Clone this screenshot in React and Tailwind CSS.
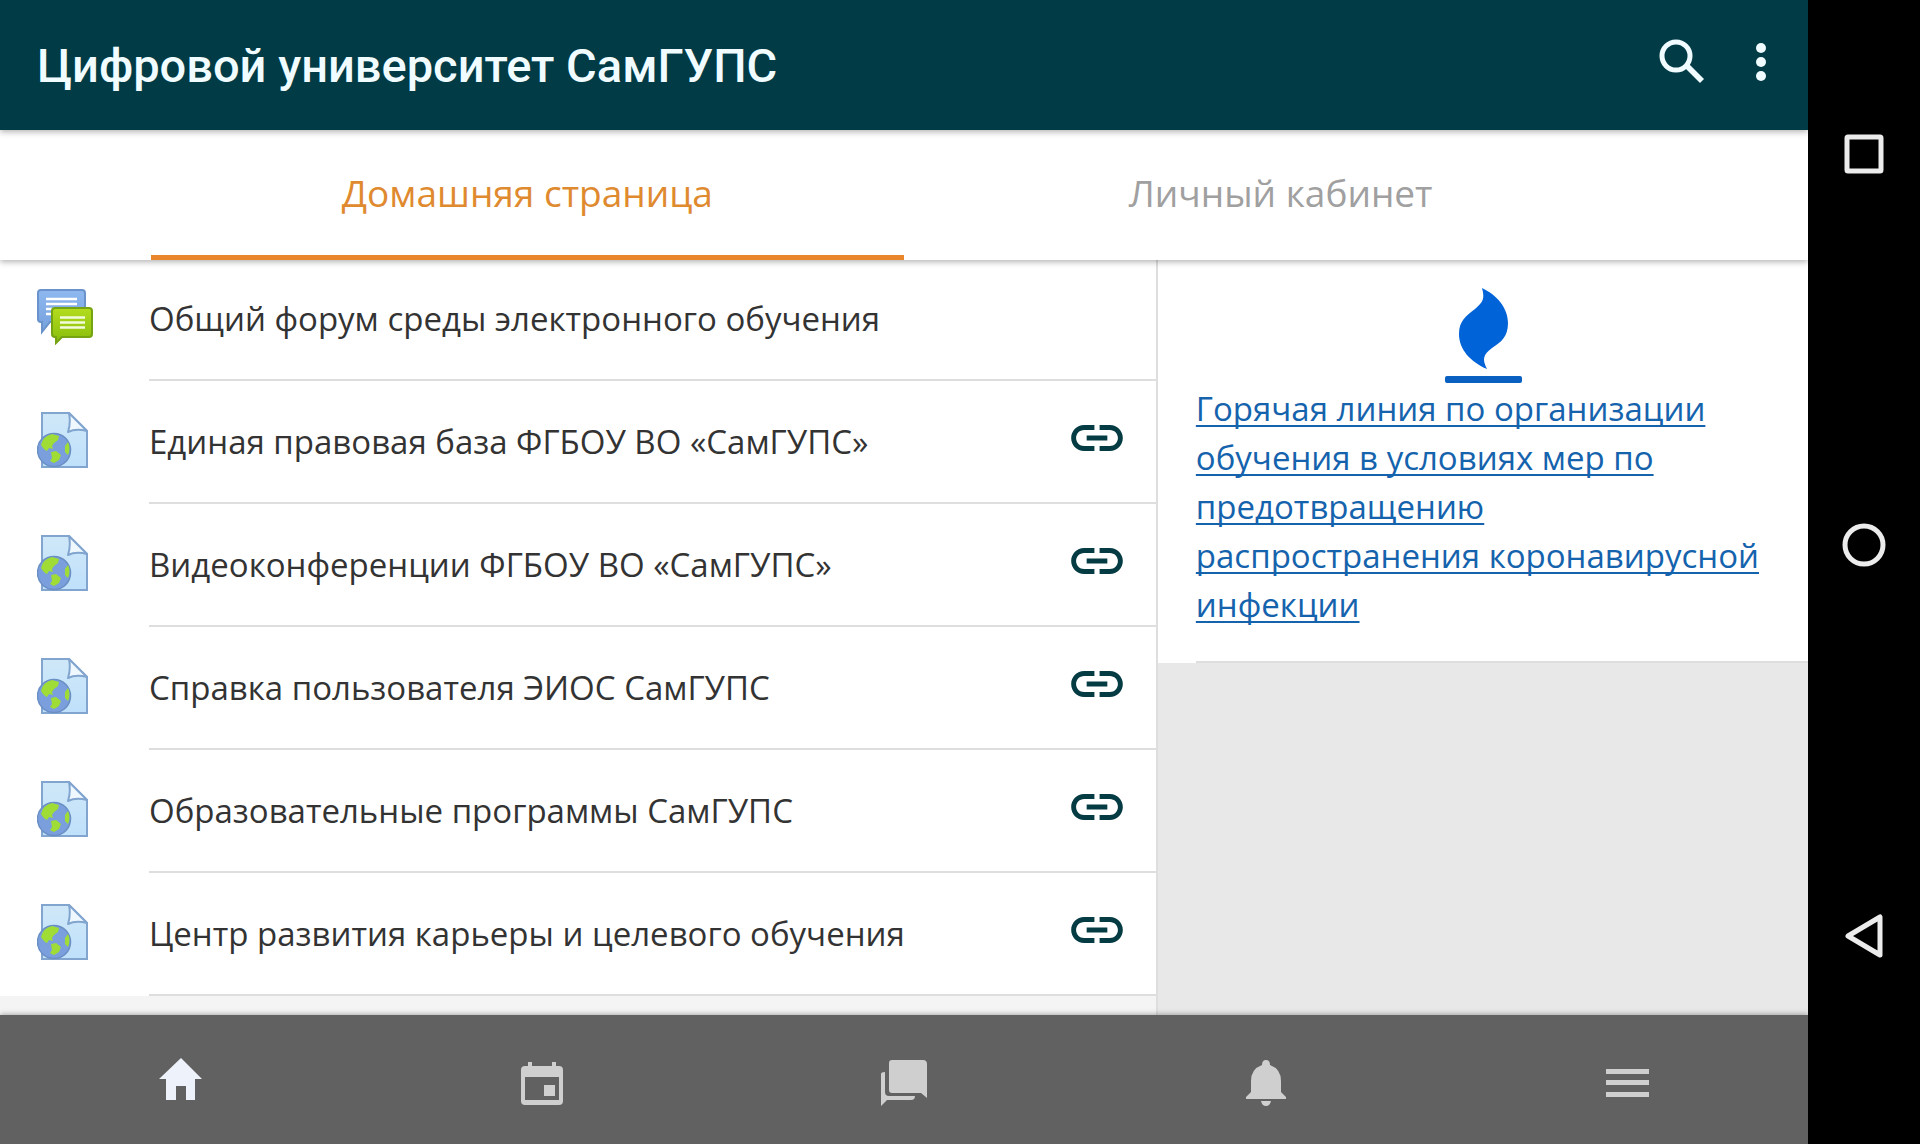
const resources = [
  { title: 'Общий форум среды электронного обучения', kind: 'forum' },
  { title: 'Единая правовая база ФГБОУ ВО «СамГУПС»', kind: 'page' },
  { title: 'Видеоконференции ФГБОУ ВО «СамГУПС»', kind: 'page' },
  { title: 'Справка пользователя ЭИОС СамГУПС', kind: 'page' },
  { title: 'Образовательные программы СамГУПС', kind: 'page' },
  { title: 'Центр развития карьеры и целевого обучения', kind: 'page' },
];

function ForumIcon() {
  return (
    <svg viewBox="0 0 56 56" className="size-14 shrink-0" aria-hidden="true">
      <defs>
        <linearGradient id="blueBubble" x1="0" y1="0" x2="0" y2="1">
          <stop offset="0" stopColor="#8fb8f0" />
          <stop offset="1" stopColor="#74a0dc" />
        </linearGradient>
        <linearGradient id="greenBubble" x1="0" y1="0" x2="0" y2="1">
          <stop offset="0" stopColor="#b4dc1e" />
          <stop offset="1" stopColor="#86bc0c" />
        </linearGradient>
      </defs>
      <path d="M4 1h41q3 0 3 3v26q0 3-3 3H13l-8 10V33H4q-3 0-3-3V4q0-3 3-3z" fill="url(#blueBubble)" stroke="#6b93cb" strokeWidth="2" />
      <path d="M9 10h31M9 15h31M9 20h10M9 25h6" stroke="#fff" strokeWidth="2.500" />
      <path d="M18 19h34q3 0 3 3v23q0 3-3 3H25l-6 6v-6h-1q-3 0-3-3V22q0-3 3-3z" fill="url(#greenBubble)" stroke="#76a312" strokeWidth="2" />
      <path d="M23 28.500h25M23 33.500h25M23 38.500h25" stroke="#f2fadc" strokeWidth="2.500" />
    </svg>
  );
}

function PageIcon() {
  return (
    <svg viewBox="0 0 56 56" className="size-14 shrink-0" aria-hidden="true">
      <defs>
        <linearGradient id="sheet" x1="0" y1="0" x2="0" y2="1">
          <stop offset="0" stopColor="#cfe8f8" />
          <stop offset="1" stopColor="#bfe0fb" />
        </linearGradient>
      </defs>
      <path d="M5 1h27l18 18v36H5z" fill="url(#sheet)" stroke="#82a5d0" strokeWidth="2" />
      <path d="M32 1q2 10-1 19 8-4 19-1z" fill="#eef8fe" stroke="#82a5d0" strokeWidth="2" strokeLinejoin="round" />
      <circle cx="17" cy="38" r="16.500" fill="#7a9fdc" stroke="#6a8fc4" strokeWidth="1.500" />
      <path d="M4 33q2-9 11-11l7 2-1 4-4 3-2 3 1 3-4-1-2 3q-3-1-6-6zM14 40l5-1 5 4-2 5-5 3-4-2 2-3zM31 30q3 6 0 13l-3-3v-6z" fill="#9fdc35" />
    </svg>
  );
}

function SolidIcon({ d, className }) {
  return (
    <svg viewBox="0 0 24 24" fill="currentColor" className={className} aria-hidden="true">
      <path d={d} />
    </svg>
  );
}

const LINK =
  'M3.900 12c0-1.710 1.390-3.100 3.100-3.100h4V7H7c-2.760 0-5 2.240-5 5s2.240 5 5 5h4v-1.900H7c-1.710 0-3.100-1.390-3.100-3.100zM8 13h8v-2H8v2zm9-6h-4v1.900h4c1.710 0 3.100 1.390 3.100 3.100s-1.390 3.100-3.100 3.100h-4V17h4c2.760 0 5-2.240 5-5s-2.240-5-5-5z';

const navItems = [
  { label: 'Домашняя страница', active: true, paths: <path d="M18 40V26h10v14h9V19h7L23-2 1 19h7v21z" /> },
  {
    label: 'Календарь',
    paths: <path fillRule="evenodd" d="M9 2h4v4h20V2h4v4h3q4 0 4 4v31q0 4-4 4H6q-4 0-4-4V10q0-4 4-4h3zM6 17v23h34V17zM25 25h11v11H25z" />,
  },
  {
    label: 'Сообщения',
    paths: <path d="M11 0h31q4 0 4 4v34l-6-5H11q-3 0-3-3V3q0-3 3-3zM0 46V14q0-2 4-2v20q0 4 4 4h26q0 4-4 4H6z" />,
  },
  {
    label: 'Уведомления',
    paths: <path d="M23 0q4 0 4 5 11 4 11 16v11l5 5v2H3v-2l5-5V21Q8 9 19 5q0-5 4-5zM18 41h10q-1 5-5 5t-5-5z" />,
  },
  { label: 'Ещё', paths: <path d="M2 9h43v5H2zM2 20h43v5H2zM2 32h43v5H2z" /> },
];

function TopBar() {
  return (
    <header className="z-20 flex h-[130px] shrink-0 items-center bg-[#003b46] pr-2 pl-[37px] text-[#f0fcff] shadow-[0_2px_6px_rgba(0,0,0,0.3)]">
      <h1 className="min-w-0 flex-1 font-['Roboto',sans-serif] text-[47px] leading-none font-medium">Цифровой университет СамГУПС</h1>
      <button type="button" aria-label="Поиск" className="flex size-20 items-center justify-center pb-1.5">
        <svg viewBox="0 0 46 46" className="size-[46px]" fill="none" stroke="currentColor" aria-hidden="true">
          <circle cx="17" cy="17" r="14" strokeWidth="5" />
          <path d="M27 27v3l14 14 4-4-14-14h-3z" fill="currentColor" stroke="none" />
        </svg>
      </button>
      <button type="button" aria-label="Меню" className="flex h-20 w-[78px] items-center justify-center pb-1.5">
        <svg viewBox="0 0 12 40" className="h-10 w-3" fill="currentColor" aria-hidden="true">
          <circle cx="6" cy="6" r="5" />
          <circle cx="6" cy="20" r="5" />
          <circle cx="6" cy="34" r="5" />
        </svg>
      </button>
    </header>
  );
}

function Tabs() {
  return (
    <div role="tablist" className="z-10 grid h-[130px] shrink-0 grid-cols-12 bg-white text-[37px] shadow-[0_2px_6px_rgba(0,0,0,0.3)]">
      <button type="button" role="tab" aria-selected="true" className="col-span-5 col-start-2 border-b-5 border-[#e9852b] text-[#e08a30]">
        Домашняя страница
      </button>
      <button type="button" role="tab" aria-selected="false" className="col-span-5 border-b-5 border-transparent text-[#a0a0a0]">
        Личный кабинет
      </button>
    </div>
  );
}

function ResourceRow({ item }) {
  return (
    <li className="flex h-[123px] items-center bg-white pl-[37px] text-[#333]">
      <div className="w-28 pb-1.5">{item.kind === 'forum' ? <ForumIcon /> : <PageIcon />}</div>
      <div className="flex h-full min-w-0 flex-1 items-center border-b-2 border-[#dedede] pr-7">
        <a href="#resource" className="min-w-0 flex-1 text-[33px]">{item.title}</a>
        {item.kind === 'page' && (
          <button type="button" aria-label="Открыть ссылку" className="pb-2 text-[#053c44]">
            <SolidIcon d={LINK} className="size-[62px]" />
          </button>
        )}
      </div>
    </li>
  );
}

function HotlineCard() {
  return (
    <div className="bg-white pl-[38px]">
      <div className="border-b-2 border-[#dedede] pt-7 pr-9 pb-8">
        <svg viewBox="0 0 78 96" className="mx-auto h-24 w-[78px]" aria-hidden="true">
          <path d="M37 0C52 7 63 20 63 35C63 49 56 54 47 60C38 67 37 71 42 81C26 74 14 62 14 46C14 33 21 28 30 21C38 14 40 11 37 0z" fill="#0063d8" />
          <rect y="88" width="77" height="7" rx="2" fill="#0a60c0" />
        </svg>
        <a href="#hotline" className="block text-[33px] leading-[49px] text-[#1563ad] underline decoration-2 underline-offset-4 [text-decoration-skip-ink:none]">
          Горячая линия по организации обучения в условиях мер по предотвращению распространения коронавирусной инфекции
        </a>
      </div>
    </div>
  );
}

function BottomNav() {
  return (
    <nav className="z-10 flex h-[129px] shrink-0 bg-[#616161] shadow-[0_-1px_5px_rgba(0,0,0,0.3)]">
      {navItems.map((item) => (
        <button
          key={item.label}
          type="button"
          aria-label={item.label}
          className={item.active ? 'flex flex-1 items-center justify-center pt-1.5 text-[#edf2fb]' : 'flex flex-1 items-center justify-center pt-1.5 text-[#cfcfcf]'}
        >
          <svg viewBox="0 0 46 46" className="size-[46px] overflow-visible" fill="currentColor" aria-hidden="true">
            {item.paths}
          </svg>
        </button>
      ))}
    </nav>
  );
}

function SystemBar() {
  return (
    <aside className="flex w-28 shrink-0 flex-col items-center justify-between bg-black pt-[126px] pb-[180px]">
      <button type="button" aria-label="Недавние приложения" className="flex size-14 items-center justify-center">
        <svg viewBox="0 0 46 46" className="size-[46px]" fill="none" stroke="#ececec" strokeWidth="5" aria-hidden="true">
          <rect x="6" y="6" width="34" height="34" rx="1" />
        </svg>
      </button>
      <button type="button" aria-label="Главный экран" className="flex size-14 items-center justify-center">
        <svg viewBox="0 0 46 46" className="size-[46px]" fill="none" stroke="#ececec" strokeWidth="5" aria-hidden="true">
          <circle cx="23" cy="23" r="19" />
        </svg>
      </button>
      <button type="button" aria-label="Назад" className="flex size-14 items-center justify-center">
        <svg viewBox="0 0 46 46" className="size-[46px]" fill="none" stroke="#ececec" strokeWidth="5" strokeLinejoin="round" aria-hidden="true">
          <path d="M7 23L39 4v38z" />
        </svg>
      </button>
    </aside>
  );
}

export default function App() {
  return (
    <div className="flex min-h-screen bg-black font-['Open_Sans',sans-serif]">
      <div className="flex min-w-0 flex-1 flex-col">
        <TopBar />
        <Tabs />
        <main className="flex flex-1">
          <section className="min-w-0 flex-[64] border-r-2 border-[#dedede] bg-[#f4f4f4]">
            <ul className="-mt-0.5">
              {resources.map((item) => (
                <ResourceRow key={item.title} item={item} />
              ))}
            </ul>
          </section>
          <aside className="min-w-0 flex-[36] bg-[#e8e8e8]">
            <HotlineCard />
          </aside>
        </main>
        <BottomNav />
      </div>
      <SystemBar />
    </div>
  );
}
